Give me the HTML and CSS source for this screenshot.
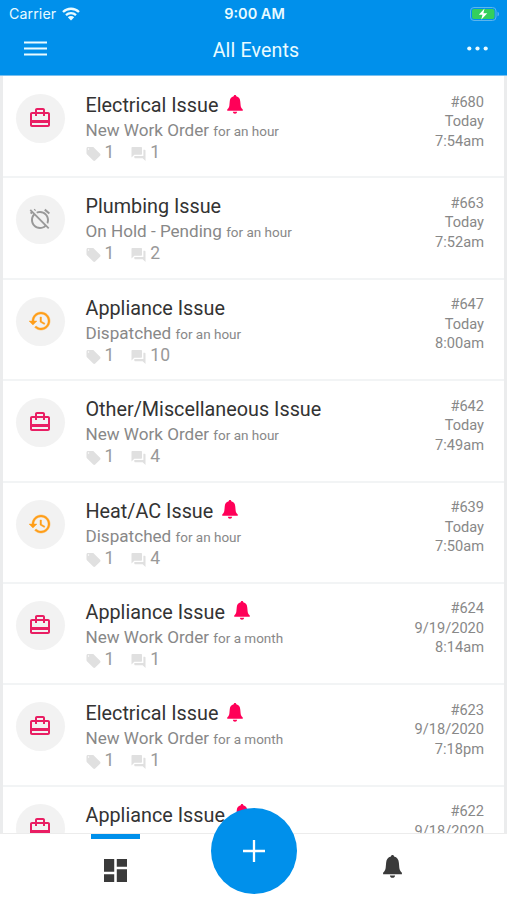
FILE: index.html
```html
<!DOCTYPE html>
<html lang="en">
<head>
<meta charset="utf-8">
<title>All Events</title>
<link rel="stylesheet" href="styles.css">
</head>
<body>
<svg class="sprite" aria-hidden="true">
  <symbol id="work" viewBox="0 0 24 24"><path d="M20 6h-3V4c0-1.11-.89-2-2-2H9c-1.11 0-2 .89-2 2v2H4c-1.11 0-2 .89-2 2v11c0 1.11.89 2 2 2h16c1.11 0 2-.89 2-2V8c0-1.11-.89-2-2-2zM9 4h6v2H9V4zm11 15H4v-2h16v2zm0-5H4V8h3v2h2V8h6v2h2V8h3v6z"/></symbol>
  <symbol id="hold" viewBox="0 0 24 24"><path d="M12 6c3.87 0 7 3.13 7 7 0 .84-.16 1.65-.43 2.4l1.52 1.52c.58-1.19.91-2.51.91-3.92 0-4.97-4.03-9-9-9-1.41 0-2.73.33-3.92.91L9.6 6.43C10.35 6.16 11.16 6 12 6zm10-.28l-4.6-3.86-1.29 1.53 4.6 3.86L22 5.72zM2.92 2.29L1.65 3.57 2.98 4.9l-1.11.93 1.42 1.42 1.11-.94.8.8C3.83 8.69 3 10.75 3 13c0 4.97 4.02 9 9 9 2.25 0 4.31-.83 5.89-2.2l2.2 2.2 1.27-1.27L3.89 3.27l-.97-.98zm13.55 16.1C15.26 19.39 13.7 20 12 20c-3.87 0-7-3.13-7-7 0-1.7.61-3.26 1.61-4.47l9.86 9.86zM8.02 3.28L6.6 1.86l-.86.71 1.42 1.42.86-.71z"/></symbol>
  <symbol id="history" viewBox="0 0 24 24"><path d="M13 3c-4.97 0-9 4.03-9 9H1l3.89 3.89.07.14L9 12H6c0-3.87 3.13-7 7-7s7 3.13 7 7-3.13 7-7 7c-1.93 0-3.68-.79-4.94-2.06l-1.42 1.42C8.27 19.99 10.51 21 13 21c4.97 0 9-4.03 9-9s-4.03-9-9-9zm-1 5v5l4.28 2.54.72-1.21-3.5-2.08V8H12z"/></symbol>
  <symbol id="tag" viewBox="2 2 20 20"><path d="M21.41 11.58l-9-9C12.05 2.22 11.55 2 11 2H4c-1.1 0-2 .9-2 2v7c0 .55.22 1.05.59 1.42l9 9c.36.36.86.58 1.41.58.55 0 1.05-.22 1.41-.59l7-7c.37-.36.59-.86.59-1.41 0-.55-.23-1.06-.59-1.42zM4.900 5.900a1 1 0 1 1 0-2 1 1 0 0 1 0 2z"/></symbol>
  <symbol id="forum" viewBox="2 2 20 20"><path d="M21 6h-2v9H6v2c0 .55.45 1 1 1h11l4 4V7c0-.55-.45-1-1-1zm-4 6V3c0-.55-.45-1-1-1H3c-.55 0-1 .45-1 1v14l4-4h10c.55 0 1-.45 1-1z"/></symbol>
  <symbol id="bell" viewBox="0 0 18 22"><path d="M9 0c-.9 0-1.400.6-1.500 1.500C4.600 2.200 3.100 4.500 2.900 7.500L2.500 12c-.2 2-.8 3.300-2.500 4.900v1.400h18v-1.400c-1.700-1.600-2.300-2.900-2.500-4.900l-.4-4.500c-.2-3-1.700-5.300-4.600-6C10.400.6 9.900 0 9 0zM6.500 19.500c.2 1.400 1.100 2.200 2.500 2.200s2.300-.8 2.500-2.200z"/></symbol>
</svg>
<div class="app">
  <header class="header">
    <div class="status">
      <div class="carrier">Carrier
        <svg class="wifi" viewBox="0 0 18 14"><path d="M1 5a11.500 11.500 0 0 1 16 0M4 8.200a7.300 7.300 0 0 1 10 0" fill="none" stroke="currentColor" stroke-width="2.300"/><path d="M5.800 10.200a4.600 4.600 0 0 1 6.400 0L9 13.500z" fill="currentColor"/></svg>
      </div>
      <div class="clock">9:00 AM</div>
      <svg class="battery" viewBox="0 0 30 14"><rect x=".5" y=".5" width="25.500" height="13" rx="3.500" fill="none" stroke="#5cb5ee"/><rect x="2" y="2" width="22.500" height="10" rx="2" fill="#34cf5c"/><path d="M27.500 4.700c2 .6 2 4 0 4.600z" fill="#5cb5ee"/><path d="M14.500 1.500 8.800 7.700h3.700l-1.300 5 6.100-6.500h-3.900z" fill="#fff"/></svg>
    </div>
    <div class="toolbar">
      <svg class="menu" viewBox="0 0 23 15"><path d="M0 1.500h23M0 7.500h23M0 13.500h23" stroke="currentColor" stroke-width="2"/></svg>
      <h1>All Events</h1>
      <svg class="more" viewBox="0 0 21 5"><g fill="currentColor"><circle cx="2.300" cy="2.500" r="2.100"/><circle cx="10.500" cy="2.500" r="2.100"/><circle cx="18.700" cy="2.500" r="2.100"/></g></svg>
    </div>
  </header>
  <main class="list">
    <article class="row"><div class="avatar new"><svg><use href="#work"/></svg></div>
      <div class="body"><h2>Electrical Issue<svg class="alert"><use href="#bell"/></svg></h2><p>New Work Order <small>for an hour</small></p><div class="counts"><span><svg><use href="#tag"/></svg>1</span><span><svg><use href="#forum"/></svg>1</span></div></div>
      <div class="meta"><span>#680</span><span>Today</span><span>7:54am</span></div></article>
    <article class="row"><div class="avatar held"><svg><use href="#hold"/></svg></div>
      <div class="body"><h2>Plumbing Issue</h2><p>On Hold - Pending <small>for an hour</small></p><div class="counts"><span><svg><use href="#tag"/></svg>1</span><span><svg><use href="#forum"/></svg>2</span></div></div>
      <div class="meta"><span>#663</span><span>Today</span><span>7:52am</span></div></article>
    <article class="row"><div class="avatar sent"><svg><use href="#history"/></svg></div>
      <div class="body"><h2>Appliance Issue</h2><p>Dispatched <small>for an hour</small></p><div class="counts"><span><svg><use href="#tag"/></svg>1</span><span><svg><use href="#forum"/></svg>10</span></div></div>
      <div class="meta"><span>#647</span><span>Today</span><span>8:00am</span></div></article>
    <article class="row"><div class="avatar new"><svg><use href="#work"/></svg></div>
      <div class="body"><h2>Other/Miscellaneous Issue</h2><p>New Work Order <small>for an hour</small></p><div class="counts"><span><svg><use href="#tag"/></svg>1</span><span><svg><use href="#forum"/></svg>4</span></div></div>
      <div class="meta"><span>#642</span><span>Today</span><span>7:49am</span></div></article>
    <article class="row"><div class="avatar sent"><svg><use href="#history"/></svg></div>
      <div class="body"><h2>Heat/AC Issue<svg class="alert"><use href="#bell"/></svg></h2><p>Dispatched <small>for an hour</small></p><div class="counts"><span><svg><use href="#tag"/></svg>1</span><span><svg><use href="#forum"/></svg>4</span></div></div>
      <div class="meta"><span>#639</span><span>Today</span><span>7:50am</span></div></article>
    <article class="row"><div class="avatar new"><svg><use href="#work"/></svg></div>
      <div class="body"><h2>Appliance Issue<svg class="alert"><use href="#bell"/></svg></h2><p>New Work Order <small>for a month</small></p><div class="counts"><span><svg><use href="#tag"/></svg>1</span><span><svg><use href="#forum"/></svg>1</span></div></div>
      <div class="meta"><span>#624</span><span>9/19/2020</span><span>8:14am</span></div></article>
    <article class="row"><div class="avatar new"><svg><use href="#work"/></svg></div>
      <div class="body"><h2>Electrical Issue<svg class="alert"><use href="#bell"/></svg></h2><p>New Work Order <small>for a month</small></p><div class="counts"><span><svg><use href="#tag"/></svg>1</span><span><svg><use href="#forum"/></svg>1</span></div></div>
      <div class="meta"><span>#623</span><span>9/18/2020</span><span>7:18pm</span></div></article>
    <article class="row"><div class="avatar new"><svg><use href="#work"/></svg></div>
      <div class="body"><h2>Appliance Issue<svg class="alert"><use href="#bell"/></svg></h2><p>New Work Order <small>for a month</small></p></div>
      <div class="meta"><span>#622</span><span>9/18/2020</span></div></article>
  </main>
  <nav class="tabs">
    <div class="tab active"><svg class="dash" viewBox="3 3 18 18"><path d="M3 13h8V3H3v10zm0 8h8v-6H3v6zm10 0h8V11h-8v10zm0-18v6h8V3h-8z"/></svg></div>
    <div class="tab"><svg class="tab-bell"><use href="#bell"/></svg></div>
    <div class="fab"><svg viewBox="0 0 22 22"><path d="M11 0v22M0 11h22" stroke="currentColor" stroke-width="2.300"/></svg></div>
  </nav>
</div>
</body>
</html>
```
FILE: styles.css
```css
* { box-sizing: border-box; }
body { margin: 0; font-family: Roboto, sans-serif; background: #fff; }
svg { display: block; }
.sprite { display: none; }
.app { display: flex; flex-direction: column; width: 507px; height: 900px; overflow: hidden; }

.header { height: 76px; flex: none; background: #0090eb; color: #e9fbff; border-bottom: 1px solid #79bfee; }
.status { display: grid; grid-template-columns: 1fr auto 1fr; align-items: center; height: 27px; padding: 0 7px 0 9px; font-family: Inter, sans-serif; font-size: 14.500px; }
.carrier { display: flex; align-items: center; gap: 6px; font-size: 14.200px; letter-spacing: .1px; }
.wifi { width: 18px; height: 14px; }
.clock { font-weight: 600; font-size: 14.500px; }
.battery { width: 30px; height: 14px; justify-self: end; }
.toolbar { display: grid; grid-template-columns: 1fr auto 1fr; align-items: center; height: 42px; padding: 0 19px 0 24px; }
.toolbar h1 { margin: 4px 0 0; font-size: 19.600px; font-weight: 400; letter-spacing: .15px; }
.menu { width: 23px; height: 15px; }
.more { width: 21px; height: 5px; justify-self: end; }

.list { flex: 1; min-height: 0; overflow: hidden; padding-top: 1px; border: solid #ebeced; border-width: 0 3px; }
.row { display: flex; height: 101.400px; padding: 17px 20px 0 13px; border-bottom: 2px solid #f2f4f5; }
.avatar { flex: none; display: grid; place-items: center; width: 49px; height: 49px; border-radius: 50%; background: #f2f2f2; }
.avatar svg { width: 24px; height: 24px; margin: 0 1px 1px 0; fill: currentColor; }
.new { color: #e91e63; }
.held { color: #999; }
.sent { color: #ff9e19; }
.sent svg { stroke: currentColor; stroke-width: .4; }
.body { flex: 1; margin-left: 20.500px; color: #888; }
.body h2 { display: flex; align-items: center; margin: 0; height: 23px; font-size: 19.800px; font-weight: 400; color: #333; white-space: nowrap; }
.alert { width: 16px; height: 19px; margin: -3px 0 0 9px; fill: #ff0058; }
.body p { margin: 0; font-size: 17.100px; line-height: 26px; white-space: nowrap; }
.body small { font-size: 13.500px; }
.counts { display: flex; gap: 17px; height: 19px; margin-top: -1px; font-size: 17.500px; line-height: 19px; color: #999; }
.counts span { display: flex; align-items: center; gap: 4px; }
.counts svg { width: 15px; height: 14px; margin-top: 3px; fill: #e0e0e0; }
.meta { display: flex; flex-direction: column; align-items: flex-end; margin-top: -1.500px; font-size: 14.600px; line-height: 19.500px; color: #888; }

.tabs { position: relative; flex: none; display: grid; grid-template-columns: 1fr 1fr; height: 67px; background: #fff; border-top: 1px solid #ececec; }
.tab { display: flex; flex-direction: column; align-items: center; color: #3a3a3a; }
.tab svg { fill: currentColor; }
.tab.active { padding-right: 23px; }
.tab.active::before { content: ""; width: 49px; height: 5px; background: #0090eb; }
.dash { width: 23px; height: 23px; margin: 20px 0 0 0; }
.tab-bell { width: 19px; height: 23px; margin: 21px 0 0 24px; }
.fab { position: absolute; left: 211px; top: -26px; display: grid; place-items: center; width: 86px; height: 86px; border-radius: 50%; background: #0090eb; color: #fff; }
.fab svg { width: 22px; height: 22px; }
```
